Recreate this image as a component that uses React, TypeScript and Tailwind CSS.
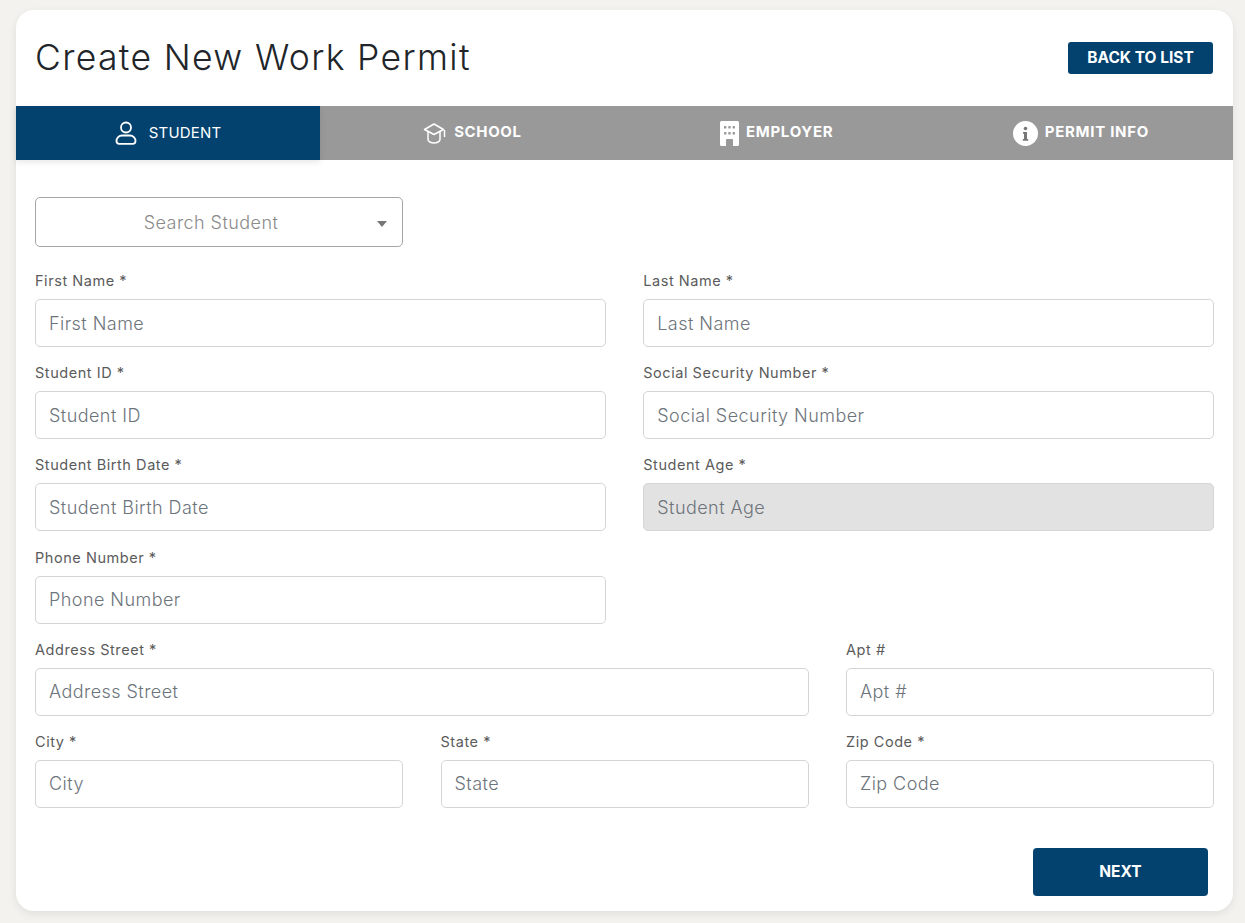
const font = "font-['Inter','Liberation_Sans',sans-serif]";

function StudentIcon() {
  return (
    <svg width="22" height="24" viewBox="0 0 22 24" fill="none" stroke="currentColor" strokeWidth="1.8">
      <circle cx="11" cy="6.5" r="5" />
      <path d="M7 14.5h8a5.500 5.500 0 0 1 5.500 5.500v0a2.800 2.800 0 0 1-2.800 2.800H4.300A2.800 2.800 0 0 1 1.500 20v0A5.500 5.500 0 0 1 7 14.500z" />
    </svg>
  );
}

function SchoolIcon() {
  return (
    <svg width="23" height="22" viewBox="0 0 23 22" fill="none" stroke="currentColor" strokeWidth="1.5" strokeLinejoin="round">
      <path d="M1.500 7.500 11 2l9.500 5.500L11 12.500z" />
      <path d="M5 10v7.500c0 2 3 3.500 6 3.500s6-1.500 6-3.500V10" />
      <path d="M21.500 8v7" />
    </svg>
  );
}

function BuildingIcon() {
  return (
    <svg width="19" height="25" viewBox="0 0 19 25">
      <path
        fill="currentColor"
        fillRule="evenodd"
        d="M1.500 0h16A1.500 1.500 0 0 1 19 1.500V23.500A1.500 1.500 0 0 1 17.500 25H13V19a1 1 0 0 0-1-1H7a1 1 0 0 0-1 1v6H1.500A1.500 1.500 0 0 1 0 23.500V1.500A1.500 1.500 0 0 1 1.500 0z"
      />
      <g fill="#999999">
        <rect x="4" y="5" width="2.400" height="2.400" rx="0.500" />
        <rect x="8.300" y="5" width="2.400" height="2.400" rx="0.500" />
        <rect x="12.600" y="5" width="2.400" height="2.400" rx="0.500" />
        <rect x="4" y="11" width="2.400" height="2.400" rx="0.500" />
        <rect x="8.300" y="11" width="2.400" height="2.400" rx="0.500" />
        <rect x="12.600" y="11" width="2.400" height="2.400" rx="0.500" />
      </g>
    </svg>
  );
}

function InfoIcon() {
  return (
    <svg width="25" height="25" viewBox="0 0 25 25">
      <circle cx="12.500" cy="12.500" r="12.500" fill="currentColor" />
      <circle cx="12.500" cy="7.500" r="1.800" fill="#777777" />
      <path fill="#777777" d="M10 11h4v7h1.200v1.800H9.800V18H11v-5.200h-1z" />
    </svg>
  );
}

function Field({ label, span, disabled }: { label: string; span: string; disabled?: boolean }) {
  const placeholder = label.replace(" *", "");
  return (
    <div className={span}>
      <label className="block h-[19px] text-[14.5px] leading-[19px] tracking-[0.55px] text-[#5b5b5b]">{label}</label>
      <input
        placeholder={placeholder}
        disabled={disabled}
        className={
          "mt-[9px] block h-[48px] w-full rounded-[5px] border border-[#d5d5d5] px-[13px] text-[18px] tracking-[0.45px] outline-none placeholder:text-[#6d747b] placeholder:font-light " +
          (disabled ? "bg-[#e2e2e2]" : "bg-white")
        }
      />
    </div>
  );
}

export default function App() {
  return (
    <div className={`${font} h-[923px] overflow-hidden bg-[#f3f2ee] pt-[10px] pl-[16px] pr-[12px]`}>
      <div className="h-[901px] rounded-[18px] bg-white shadow-[0_3px_8px_rgba(0,0,0,0.08)]">
        {/* Header */}
        <div className="flex h-[96px] items-center justify-between pl-[19px] pr-[20px]">
          <h1 className="text-[35.500px] font-light tracking-[1.35px] text-[#212529]">Create New Work Permit</h1>
          <button className="h-[32px] w-[145px] rounded-[3px] bg-[#03426f] text-[15.5px] font-bold text-white">BACK TO LIST</button>
        </div>

        {/* Tabs */}
        <div className="grid h-[54px] grid-cols-4 bg-[#999999] text-white">
          <div className="flex items-center justify-center gap-[12px] bg-[#03426f] shadow-[0_2px_6px_rgba(0,0,0,0.1)]">
            <StudentIcon />
            <span className="text-[15px] tracking-[0.2px]">STUDENT</span>
          </div>
          <div className="flex items-center justify-center gap-[8px]">
            <SchoolIcon />
            <span className="pb-[2px] text-[15px] font-bold tracking-[0.6px]">SCHOOL</span>
          </div>
          <div className="flex items-center justify-center gap-[7px]">
            <BuildingIcon />
            <span className="pb-[2px] text-[15px] font-bold tracking-[0.7px]">EMPLOYER</span>
          </div>
          <div className="flex items-center justify-center gap-[7px]">
            <InfoIcon />
            <span className="pb-[2px] text-[15px] font-bold tracking-[0.7px]">PERMIT INFO</span>
          </div>
        </div>

        {/* Form */}
        <div className="px-[19px] pt-[37px]">
          <div className="relative flex h-[50px] w-[368px] items-center justify-center rounded-[5px] border border-[#a6a6a6] pr-[16px] text-[18px] font-light tracking-[0.45px] text-[#8a8a8a]">
            Search Student
            <span className="absolute right-[15px] top-[23px] h-0 w-0 border-x-[5px] border-t-[6px] border-x-transparent border-t-[#777777]" />
          </div>

          <div className="mt-[24px] grid grid-cols-6 gap-x-[37.5px] gap-y-[16.200px]">
            <Field label="First Name *" span="col-span-3" />
            <Field label="Last Name *" span="col-span-3" />
            <Field label="Student ID *" span="col-span-3" />
            <Field label="Social Security Number *" span="col-span-3" />
            <Field label="Student Birth Date *" span="col-span-3" />
            <Field label="Student Age *" span="col-span-3" disabled />
            <Field label="Phone Number *" span="col-span-3" />
            <div className="col-span-3" />
            <Field label="Address Street *" span="col-span-4" />
            <Field label="Apt #" span="col-span-2" />
            <Field label="City *" span="col-span-2" />
            <Field label="State *" span="col-span-2" />
            <Field label="Zip Code *" span="col-span-2" />
          </div>

          <div className="mt-[40px] flex justify-end pr-[6px]">
            <button className="h-[48px] w-[175px] rounded-[4px] bg-[#03426f] text-[15.5px] font-bold text-white">NEXT</button>
          </div>
        </div>
      </div>
    </div>
  );
}
